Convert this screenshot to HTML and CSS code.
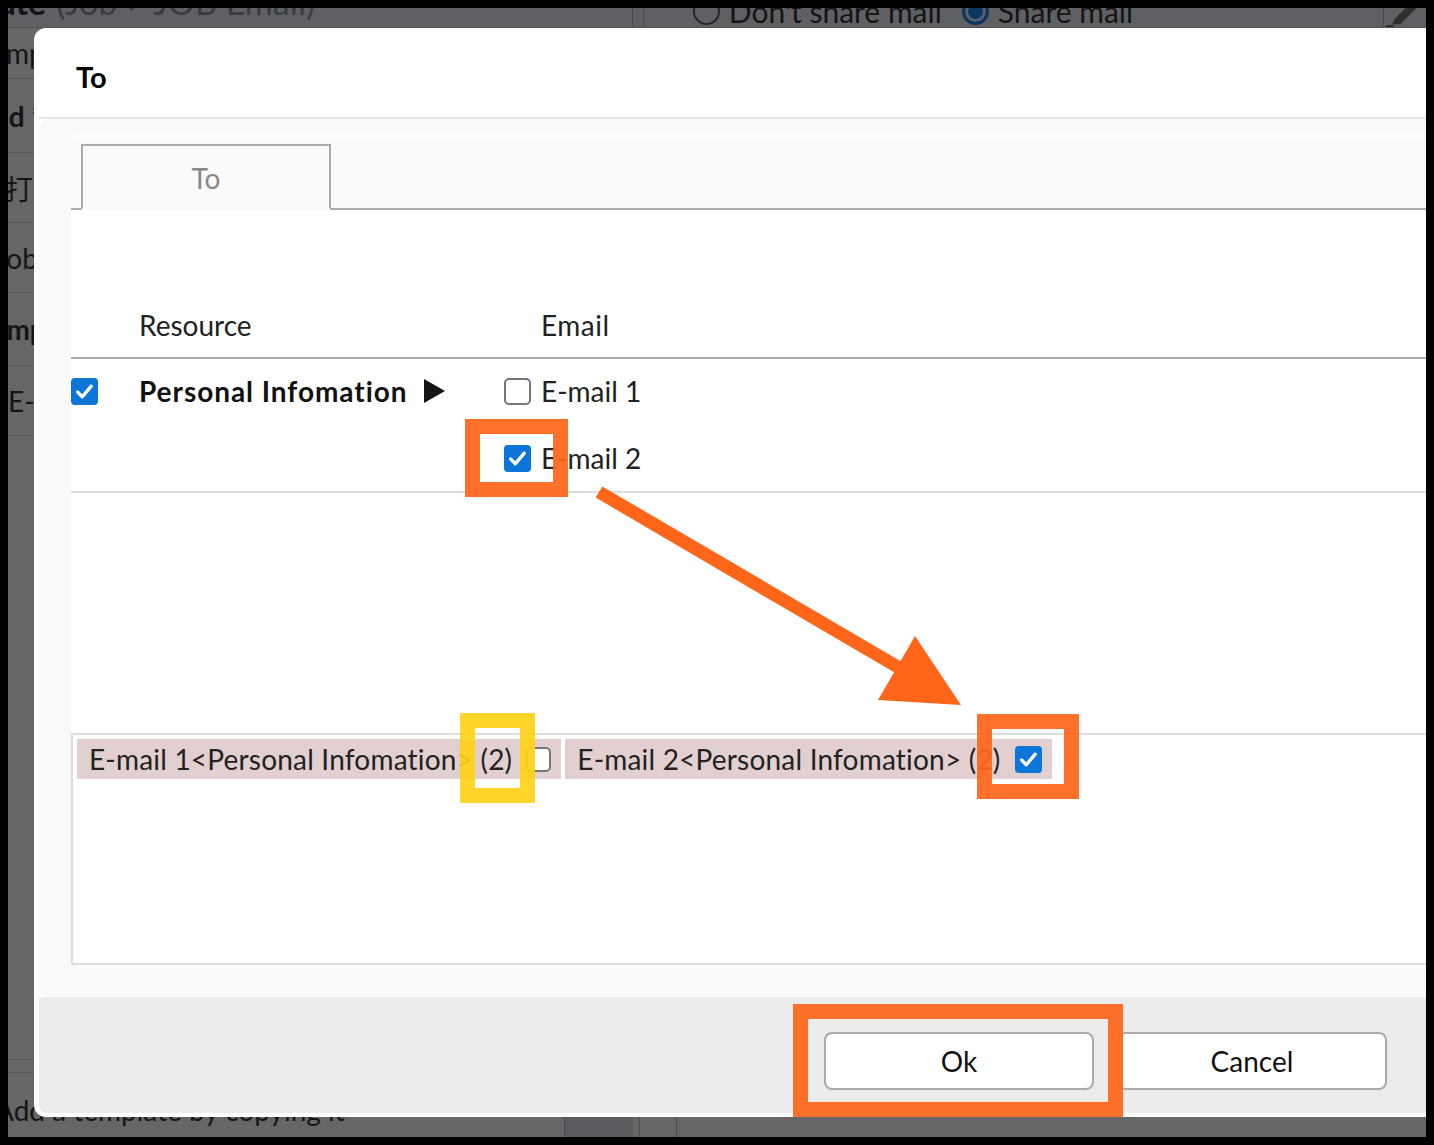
FILE: index.html
```html
<!DOCTYPE html>
<html lang="en">
<head>
    <meta charset="UTF-8">
    <title>To</title>
    <link rel="stylesheet" href="styles.css">
</head>
<body>
    <div class="screen">
        <!-- page behind the modal, already dimmed -->
        <div class="page">
            <div class="page-top">
                <div class="page-title">Template <span class="crumb">(Job &gt; JOB Email)</span></div>
                <div class="page-sep"></div>
                <div class="page-sep near"></div>
                <div class="share">
                    <span class="radio"></span>Don't share mail
                    <span class="radio on"></span>Share mail
                </div>
                <div class="page-sep far"></div>
                <svg class="edit-icon" viewBox="0 0 40 20">
                    <path d="M2 19h9" stroke="#2a2a2a" stroke-width="2"/>
                    <path d="M9 17l3-6 20-20 6 6-20 20z" fill="#2f2f2f"/>
                </svg>
            </div>
            <div class="page-main">
                <div class="page-side">
                    <div class="side-row r1"><span class="cut-2">Template</span></div>
                    <div class="side-row r2 strong"><span class="cut-3">Field *</span></div>
                    <div class="side-row r3"><span class="cut-0">打刻</span></div>
                    <div class="side-row r4"><span class="cut-1">Job</span></div>
                    <div class="side-row r5 strong"><span class="cut-2">Template</span></div>
                    <div class="side-row r6"><span>E-mail</span></div>
                    <div class="side-row r7"></div>
                    <div class="side-row r8"></div>
                </div>
            </div>
            <div class="page-bottom">
                <div class="bottom-text"><span class="cut-1">Add a template by copying it</span></div>
                <div class="bottom-cell"></div>
                <div class="page-sep"></div>
                <div class="page-sep wide"></div>
            </div>
        </div>

        <div class="dialog">
            <div class="dialog-head">To</div>
            <div class="dialog-body">
                <div class="panel">
                    <div class="tabs">
                        <div class="tab">To</div>
                    </div>

                    <div class="res-head">
                        <div class="col-check"></div>
                        <div class="col-res">Resource</div>
                        <div class="col-mail head-mail">Email</div>
                    </div>

                    <div class="res-row">
                        <div class="col-check">
                            <span class="check on"><svg viewBox="0 0 24 24"><path d="M6 12.5l4 4.2 8-9.4"/></svg></span>
                        </div>
                        <div class="col-res res-name">
                            <span class="name">Personal Infomation</span>
                            <svg class="expand" viewBox="0 0 21 24"><path d="M0 0L21 12L0 24Z"/></svg>
                        </div>
                        <div class="col-mail mail-list">
                            <label class="mail-item"><span class="check"></span>E-mail 1</label>
                            <label class="mail-item"><span class="check on"><svg viewBox="0 0 24 24"><path d="M6 12.5l4 4.2 8-9.4"/></svg></span>E-mail 2</label>
                        </div>
                    </div>

                    <div class="tag-box">
                        <span class="tag">E-mail 1&lt;Personal Infomation&gt; (2)<span class="check small"></span></span>
                        <span class="tag">E-mail 2&lt;Personal Infomation&gt; (2)<span class="check on"><svg viewBox="0 0 24 24"><path d="M6 12.5l4 4.2 8-9.4"/></svg></span></span>
                    </div>
                </div>
            </div>
            <div class="dialog-foot">
                <button class="btn">Ok</button>
                <button class="btn">Cancel</button>
            </div>
        </div>
    </div>

    <!-- annotation marks drawn on top of the screenshot -->
    <svg class="marks" viewBox="0 0 1434 1145">
        <g fill="none" stroke="#ff661a" stroke-width="15" stroke-opacity="0.93">
            <rect x="472.5" y="426.5" width="88" height="63"/>
            <rect x="984.5" y="721.5" width="87" height="70"/>
            <rect x="800.5" y="1011.5" width="315" height="98"/>
        </g>
        <rect x="467.5" y="720.5" width="60" height="75" fill="none" stroke="#ffd21a" stroke-width="15" stroke-opacity="0.93"/>
        <path d="M599 492L903 670" stroke="#ff661a" stroke-width="13"/>
        <polygon points="915,636 878,700 961,705" fill="#ff661a"/>
    </svg>
</body>
</html>
```

FILE: styles.css
```css
* {
    box-sizing: border-box;
}

html, body {
    margin: 0;
}

body {
    width: 1434px;
    height: 1145px;
    padding: 8px;
    background: #000;
    position: relative;
    overflow: hidden;
    font-family: 'Lato', 'Noto Sans CJK JP', sans-serif;
    font-size: 28px;
    color: #1b1b1b;
}

.screen {
    position: relative;
    width: 100%;
    height: 100%;
    background: #666;
    overflow: hidden;
}

/* ---- dimmed page ---- */

.page {
    height: 100%;
    display: flex;
    flex-direction: column;
    color: #151515;
}

.page-top {
    height: 20px;
    flex: none;
    display: flex;
    align-items: flex-end;
    background: #5f6064;
    border-bottom: 1px solid #545454;
    padding-bottom: 5px;
}

.page-title {
    width: 307px;
    flex: none;
    display: flex;
    justify-content: flex-end;
    white-space: nowrap;
    font-size: 34px;
    line-height: 40px;
    font-weight: 700;
    gap: 10px;
}

.crumb {
    font-weight: 400;
    color: #3b3c40;
}

.page-sep {
    width: 1px;
    align-self: stretch;
    background: #4a4b4f;
    margin-left: 317px;
    margin-bottom: -5px;
}

.page-sep.near {
    margin-left: 10px;
}

.page-sep.far {
    margin-left: 250px;
}

.share {
    display: flex;
    align-items: center;
    gap: 9px;
    margin-left: 49px;
    margin-bottom: -6px;
    font-size: 30px;
    line-height: 34px;
    white-space: nowrap;
}

.radio {
    width: 27px;
    height: 27px;
    border-radius: 50%;
    border: 2px solid #262626;
}

.radio.on {
    margin-left: 11px;
    border: 3px solid #0c3566;
    background: #0c3566;
    box-shadow: inset 0 0 0 3px #5f6064;
}

.edit-icon {
    width: 40px;
    height: 20px;
    margin-left: auto;
    margin-right: 6px;
    align-self: stretch;
    margin-bottom: -5px;
}

.page-main {
    flex: 1;
    display: flex;
}

.page-side {
    width: 300px;
    display: flex;
    flex-direction: column;
}

.side-row {
    display: flex;
    align-items: center;
    white-space: nowrap;
    overflow: hidden;
    border-bottom: 1px solid #575757;
}

.side-row.strong {
    font-weight: 700;
}

.r1 { height: 51px; }
.r2 { height: 74px; }
.r3 { height: 70px; }
.r4 { height: 70px; }
.r5 { height: 73px; }
.r6 { height: 70px; }
.r7 { height: 624px; }
.r8 { height: 13px; }

.cut-0 { margin-left: -3px; }
.cut-1 { margin-left: -13px; }
.cut-2 { margin-left: -30px; }
.cut-3 { margin-left: -44px; }

.page-bottom {
    height: 40px;
    flex: none;
    display: flex;
    align-items: flex-end;
    line-height: 34px;
    white-space: nowrap;
}

.bottom-text {
    width: 556px;
    flex: none;
    overflow: hidden;
    padding-bottom: 10px;
}

.bottom-cell {
    width: 69px;
    height: 20px;
    background: #5b5c60;
    border-left: 1px solid #4a4b4f;
}

.page-bottom .page-sep {
    margin-left: 6px;
    margin-bottom: 0;
    height: 20px;
    align-self: flex-end;
}

.page-bottom .page-sep.wide {
    margin-left: 36px;
}

/* ---- modal ---- */

.dialog {
    position: absolute;
    left: 26px;
    top: 20px;
    width: 1420px;
    height: 1089px;
    padding: 0 5px 4px;
    background: #fff;
    border-radius: 12px;
    display: flex;
    flex-direction: column;
}

.dialog-head {
    height: 91px;
    flex: none;
    padding: 8px 0 0 37px;
    display: flex;
    align-items: center;
    font-size: 29px;
    font-weight: 700;
    color: #000;
    border-bottom: 2px solid #e6e6e6;
}

.dialog-body {
    flex: 1;
    display: flex;
    flex-direction: column;
    padding: 14px 0 32px 32px;
    background: #f9f9f9;
    border-radius: 10px;
}

.panel {
    flex: 1;
    display: flex;
    flex-direction: column;
    padding-top: 6px;
    background: #fff;
    border-radius: 10px 0 0 0;
}

.tabs {
    display: flex;
    padding: 5px 0 0 5px;
    background: #fafafa;
    border-bottom: 2px solid #aaa;
}

.tab {
    width: 250px;
    height: 66px;
    margin: 0 0 -2px 5px;
    padding-top: 2px;
    display: flex;
    align-items: center;
    justify-content: center;
    color: #888;
    background: #fafafa;
    border: 2px solid #aaa;
    border-bottom-color: #fafafa;
}

.res-head {
    height: 149px;
    display: flex;
    align-items: flex-end;
    padding-bottom: 12px;
    line-height: 40px;
    border-bottom: 2px solid #aaa;
    color: #222;
}

.col-check {
    width: 68px;
    flex: none;
    height: 40px;
    display: flex;
    align-items: center;
}

.col-res {
    width: 365px;
    flex: none;
}

.head-mail {
    padding-left: 37px;
    letter-spacing: 0.5px;
}

.res-row {
    display: flex;
    align-items: flex-start;
    padding: 12px 0 13px;
    border-bottom: 2px solid #ddd;
}

.res-name {
    height: 40px;
    display: flex;
    align-items: center;
    gap: 17px;
    font-weight: 700;
    color: #111;
}

.name {
    letter-spacing: 0.95px;
}

.expand {
    width: 21px;
    height: 24px;
    fill: #141414;
}

.mail-list {
    display: flex;
    flex-direction: column;
    gap: 27px;
}

.mail-item {
    height: 40px;
    display: flex;
    align-items: center;
    gap: 10px;
    color: #222;
}

.check {
    width: 27px;
    height: 27px;
    flex: none;
    display: inline-flex;
    border: 2px solid #767676;
    border-radius: 5px;
    background: #fff;
}

.check.small {
    width: 25px;
    height: 25px;
}

.check.on {
    border: none;
    background: #0b75d8;
    border-radius: 4px;
}

.check svg {
    width: 100%;
    height: 100%;
    fill: none;
    stroke: #fff;
    stroke-width: 3;
    stroke-linecap: round;
    stroke-linejoin: round;
}

.tag-box {
    height: 232px;
    margin-top: auto;
    display: flex;
    align-items: flex-start;
    gap: 4px;
    padding: 4px 0 0 4px;
    border: 2px solid #ddd;
    border-right: none;
}

.tag {
    height: 40px;
    display: flex;
    align-items: center;
    gap: 14px;
    padding: 0 10px 0 12px;
    background: #e2d0d0;
    color: #222;
    white-space: nowrap;
    letter-spacing: 0.2px;
}

.dialog-foot {
    height: 116px;
    flex: none;
    display: flex;
    justify-content: flex-end;
    align-items: flex-start;
    gap: 23px;
    padding: 35px 62px 0 0;
    background: #ececec;
    border-radius: 0 0 8px 8px;
}

.btn {
    width: 270px;
    height: 58px;
    font-family: inherit;
    font-size: 28px;
    color: #111;
    background: #fff;
    border: 2px solid #aaa;
    border-radius: 8px;
}

/* ---- annotations ---- */

.marks {
    position: absolute;
    left: 0;
    top: 0;
    width: 1434px;
    height: 1145px;
    pointer-events: none;
}
```
